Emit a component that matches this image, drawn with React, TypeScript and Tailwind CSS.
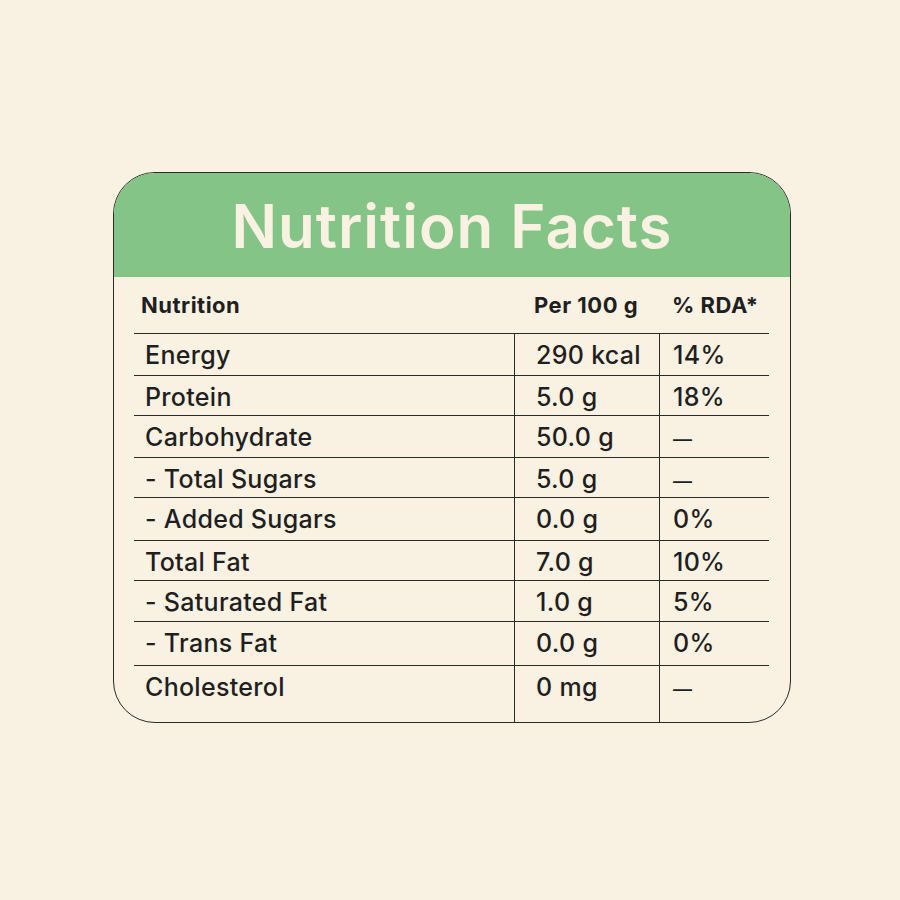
import React from 'react';

type Row = { name: string; per: string; rda: string; h: string };

const rows: Row[] = [
  { name: 'Energy', per: '290 kcal', rda: '14%', h: 'h-[42px]' },
  { name: 'Protein', per: '5.0 g', rda: '18%', h: 'h-[40px]' },
  { name: 'Carbohydrate', per: '50.0 g', rda: '—', h: 'h-[42px]' },
  { name: '- Total Sugars', per: '5.0 g', rda: '—', h: 'h-[40px]' },
  { name: '- Added Sugars', per: '0.0 g', rda: '0%', h: 'h-[43px]' },
  { name: 'Total Fat', per: '7.0 g', rda: '10%', h: 'h-[40px]' },
  { name: '- Saturated Fat', per: '1.0 g', rda: '5%', h: 'h-[41px]' },
  { name: '- Trans Fat', per: '0.0 g', rda: '0%', h: 'h-[44px]' },
  { name: 'Cholesterol', per: '0 mg', rda: '—', h: 'h-[55px]' },
];

const App: React.FC = () => {
  return (
    <div
      className="w-[900px] h-[900px] bg-[#f9f1e1] pt-[172px] pl-[113px] text-[#1f1f1f]"
      style={{ fontFamily: 'Inter, "Noto Sans", sans-serif' }}
    >
      <div className="w-[678px] h-[551px] rounded-[42px] border-[1.5px] border-[#2a2a2a] overflow-hidden flex flex-col">
        {/* Title */}
        <div className="h-[104px] bg-[#84c487] flex items-center justify-center">
          <h1 className="text-[60px] font-semibold text-[#f9f1e1] tracking-[1px] leading-none pt-[2px]">
            Nutrition Facts
          </h1>
        </div>

        <div className="px-[20px] flex-1 flex flex-col">
          {/* Column headings */}
          <div className="grid grid-cols-[380px_145px_110px] h-[56px] items-center text-[22px] font-bold tracking-[0.5px]">
            <div className="pl-[7px]">Nutrition</div>
            <div className="pl-[20px]">Per 100 g</div>
            <div className="pl-[13px]">% RDA*</div>
          </div>

          {rows.map((r) => (
            <div
              key={r.name}
              className={`grid grid-cols-[380px_145px_110px] text-[25px] font-medium tracking-[0.3px] ${r.h} last:flex-1`}
            >
              <div className="border-t-[1.5px] border-[#2a2a2a] pl-[11px] pt-[3px]">{r.name}</div>
              <div className="border-t-[1.5px] border-l-[1.5px] border-[#2a2a2a] pl-[21px] pt-[3px]">{r.per}</div>
              <div className="border-t-[1.5px] border-l-[1.5px] border-[#2a2a2a] pl-[13px] pt-[3px]">
                {r.rda === '—' ? <span className="text-[19px]">—</span> : r.rda}
              </div>
            </div>
          ))}
        </div>
      </div>
    </div>
  );
};

export default App;
